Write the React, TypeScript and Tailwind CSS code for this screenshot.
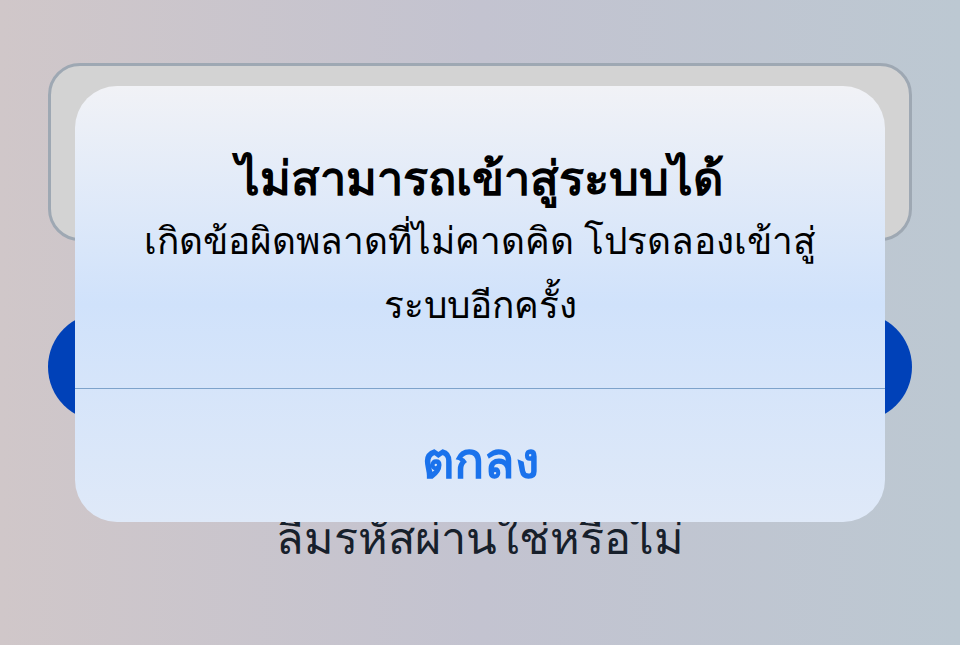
export default function App() {
  return (
    <div
      className="relative h-[645px] w-full overflow-hidden bg-gradient-to-r from-[#d0c7c9] via-[#c3c3d0] to-[#bcc8d2]"
      style={{ fontFamily: '"Noto Sans", "Liberation Sans", sans-serif' }}
    >
      {/* Background page: login form */}
      <div className="flex flex-col px-[48px] pt-[63px]">
        <div className="h-[178px] rounded-[32px] border-[3px] border-[#9ea8b3] bg-[#d3d3d3]" />
        <div className="mt-[72px] h-[108px] rounded-full bg-[#0041b8]" />
        <p className="mt-[86px] text-center text-[45px] font-medium leading-[60px] text-[#17202b]">
          ลืมรหัสผ่านใช่หรือไม่
        </p>
      </div>

      {/* Alert dialog */}
      <div className="absolute left-[75px] top-[86px] flex h-[436px] w-[810px] flex-col overflow-hidden rounded-[42px] bg-gradient-to-b from-[#f1f2f6] via-[#d0e2fb] to-[#dfe9f8]">
        <div className="flex h-[302px] flex-col items-center px-[30px] pt-[56px] text-center text-black">
          <h1 className="text-[47px] font-bold leading-[70px]">ไม่สามารถเข้าสู่ระบบได้</h1>
          <p className="mt-[-4px] text-[37px] font-medium leading-[64px]">
            เกิดข้อผิดพลาดที่ไม่คาดคิด โปรดลองเข้าสู่
            <br />
            ระบบอีกครั้ง
          </p>
        </div>
        <div className="h-px bg-[#7ea3cb]" />
        <button className="flex flex-1 items-center justify-center pt-[8px] text-[50px] font-semibold text-[#1a72ec]">
          ตกลง
        </button>
      </div>
    </div>
  );
}
